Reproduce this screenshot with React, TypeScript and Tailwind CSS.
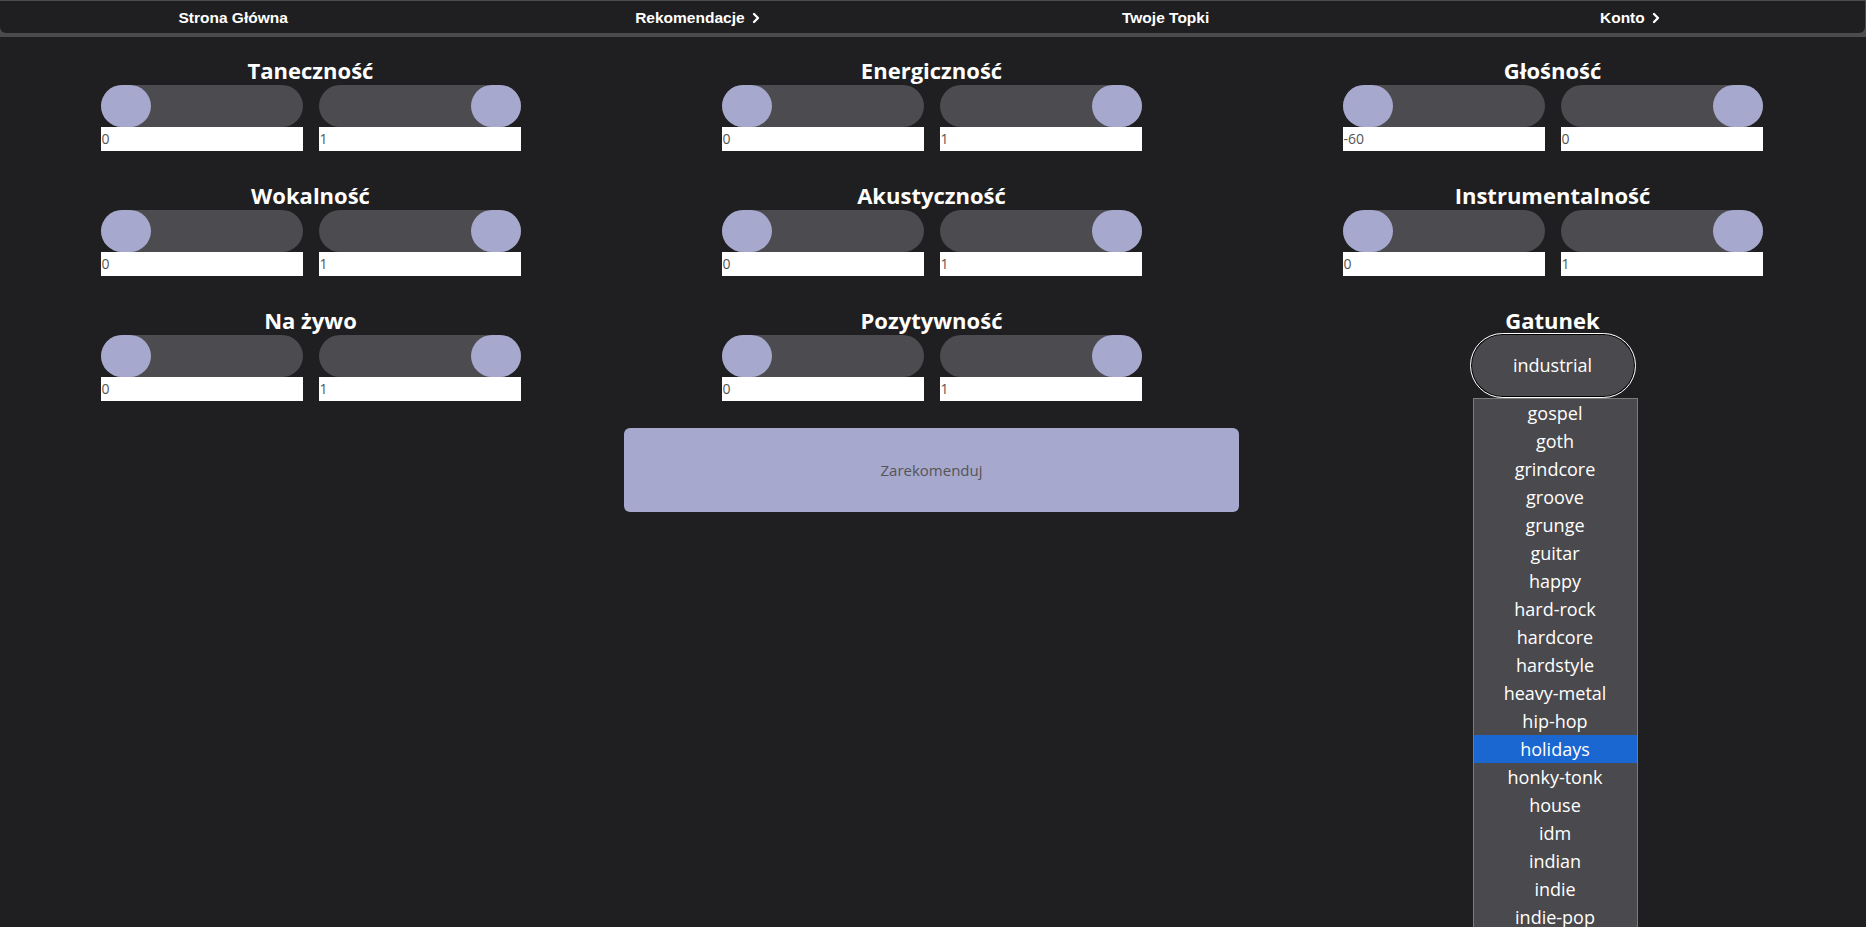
import { ChevronRight } from "lucide-react";

const navItems = [
  { label: "Strona Główna", arrow: false },
  { label: "Rekomendacje", arrow: true },
  { label: "Twoje Topki", arrow: false },
  { label: "Konto", arrow: true },
];

const features = [
  { name: "Taneczność", min: "0", max: "1" },
  { name: "Energiczność", min: "0", max: "1" },
  { name: "Głośność", min: "-60", max: "0" },
  { name: "Wokalność", min: "0", max: "1" },
  { name: "Akustyczność", min: "0", max: "1" },
  { name: "Instrumentalność", min: "0", max: "1" },
  { name: "Na żywo", min: "0", max: "1" },
  { name: "Pozytywność", min: "0", max: "1" },
];

const genres = [
  "gospel",
  "goth",
  "grindcore",
  "groove",
  "grunge",
  "guitar",
  "happy",
  "hard-rock",
  "hardcore",
  "hardstyle",
  "heavy-metal",
  "hip-hop",
  "holidays",
  "honky-tonk",
  "house",
  "idm",
  "indian",
  "indie",
  "indie-pop",
  "industrial",
];

const Slider = ({ value, end }: { value: string; end: boolean }) => {
  return (
    <div className="flex w-[202px] flex-col">
      <div
        className={
          end
            ? "flex h-[42px] justify-end rounded-full bg-[#4c4b4f]"
            : "flex h-[42px] justify-start rounded-full bg-[#4c4b4f]"
        }
      >
        <div className="h-[42px] w-[50px] rounded-full bg-[#a7a8cd]"></div>
      </div>
      <div className="h-6 bg-white pl-px text-[14px] leading-6 text-[#555] [font-family:'Open_Sans',sans-serif]">
        {value}
      </div>
    </div>
  );
};

const Feature = ({ name, min, max }: { name: string; min: string; max: string }) => {
  return (
    <div className="flex flex-col items-center">
      <h2 className="h-8 text-[22px] leading-[34px] font-bold text-white">{name}</h2>
      <div className="flex gap-4">
        <Slider value={min} end={false} />
        <Slider value={max} end={true} />
      </div>
    </div>
  );
};

const App = () => {
  return (
    <div className="h-screen overflow-hidden bg-[#1f1f21] [font-family:'Open_Sans',sans-serif]">
      <header className="bg-[#4b4b4d] pt-px pr-px pb-1">
        <nav className="grid h-8 grid-cols-4 rounded-b-md bg-[#1f1f21]">
          {navItems.map((item) => (
            <div
              key={item.label}
              className="flex items-center justify-center gap-[3px] pt-[2px] text-[15.5px] font-bold text-white [font-family:'Liberation_Sans',sans-serif]"
            >
              <span>{item.label}</span>
              {item.arrow && <ChevronRight size={16} strokeWidth={3.5} />}
            </div>
          ))}
        </nav>
      </header>

      <main className="grid grid-cols-3 gap-y-[27px] pt-4 pr-[3px]">
        {features.map((f) => (
          <Feature key={f.name} name={f.name} min={f.min} max={f.max} />
        ))}

        <div className="flex flex-col items-center">
          <h2 className="h-8 text-[22px] leading-[34px] font-bold text-white">Gatunek</h2>
          <div className="relative -mt-[2px]">
            <div className="flex h-[65px] w-[166px] items-center justify-center rounded-full border border-white bg-[#4a494d] text-[18px] text-white shadow-[inset_0_0_0_1px_#000]">
              industrial
            </div>
            <ul className="absolute top-full left-[3px] w-[165px] border border-[#7b7b7b] bg-[#4a494d]">
              {genres.map((g) => (
                <li
                  key={g}
                  className={
                    g === "holidays"
                      ? "h-7 bg-[#1a67d2] text-center text-[18px] leading-7 text-white"
                      : "h-7 text-center text-[18px] leading-7 text-white"
                  }
                >
                  {g}
                </li>
              ))}
            </ul>
          </div>
        </div>

        <div className="col-start-2">
          <button className="ml-[3px] h-[84px] w-[615px] rounded-md bg-[#a6a8cd] text-[15px] text-[#555]">
            Zarekomenduj
          </button>
        </div>
      </main>
    </div>
  );
};
export default App;
